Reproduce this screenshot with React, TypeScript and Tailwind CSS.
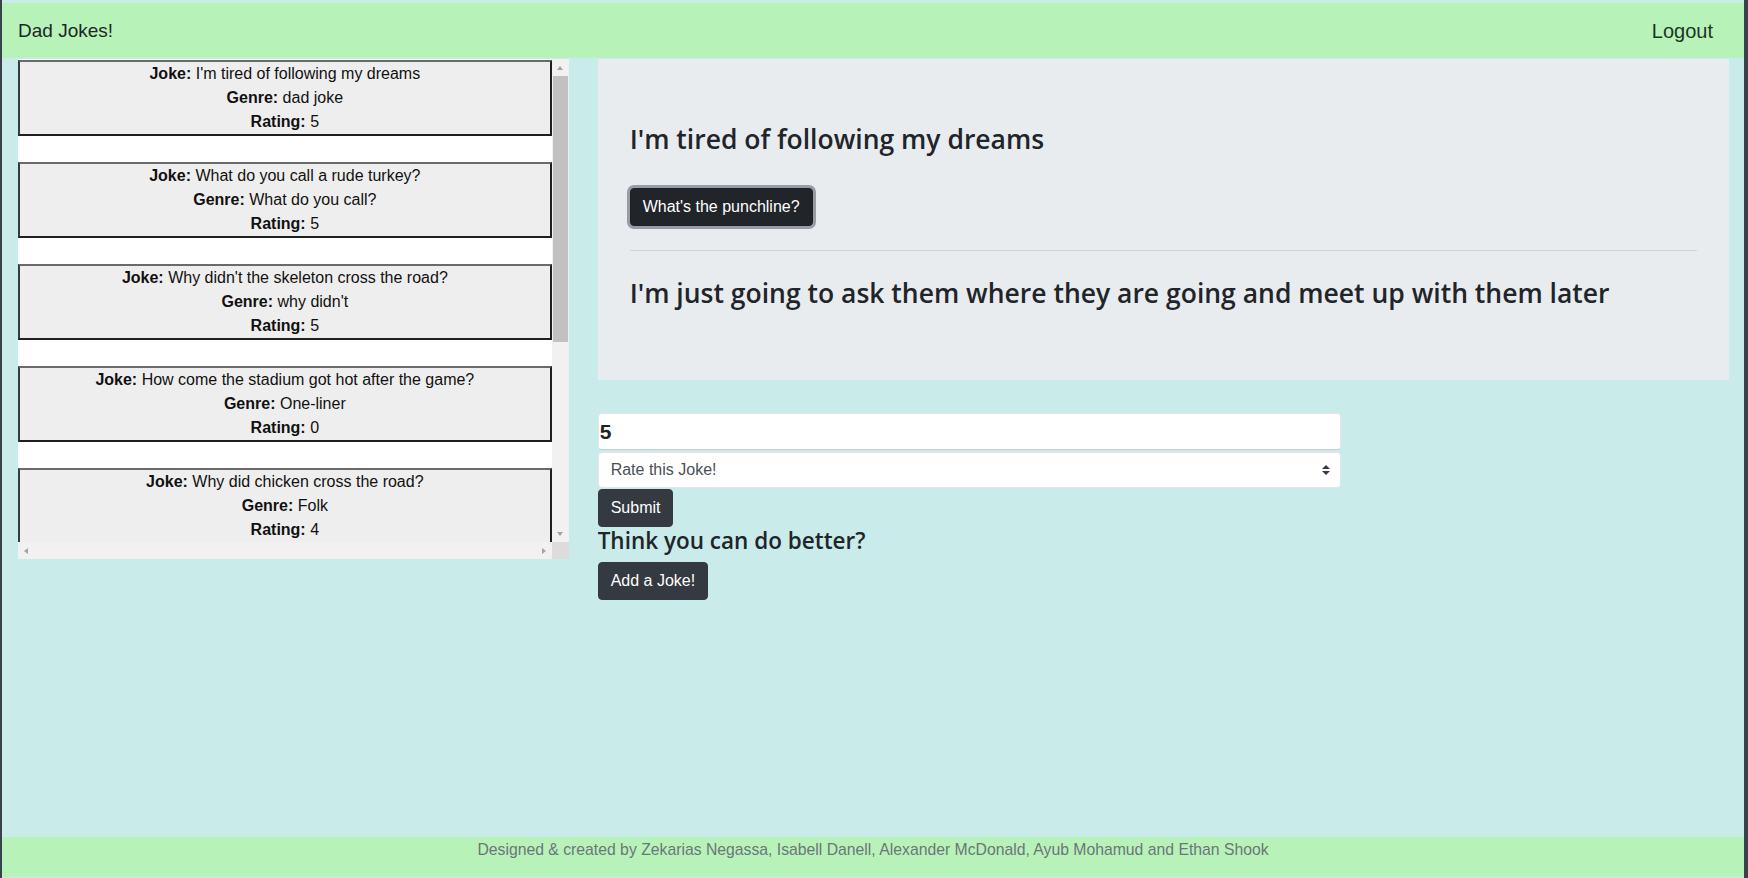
// Dad Jokes — joke list, punchline panel and rating form

const jokes = [
  { joke: "I'm tired of following my dreams", genre: "dad joke", rating: 5 },
  { joke: "What do you call a rude turkey?", genre: "What do you call?", rating: 5 },
  { joke: "Why didn't the skeleton cross the road?", genre: "why didn't", rating: 5 },
  { joke: "How come the stadium got hot after the game?", genre: "One-liner", rating: 0 },
  { joke: "Why did chicken cross the road?", genre: "Folk", rating: 4 },
  { joke: "What do you call a fake noodle?", genre: "What do you call?", rating: 3 },
  { joke: "Why don't eggs tell jokes?", genre: "dad joke", rating: 4 },
  { joke: "What did the ocean say to the beach?", genre: "One-liner", rating: 2 },
];

const font = "font-['Liberation_Sans','Noto_Sans',sans-serif]";
const heading = "font-['Open_Sans','Noto_Sans',sans-serif] font-semibold";

function Arrow({ dir }: { dir: "up" | "down" | "left" | "right" }) {
  const d = {
    up: "M4 2L7 6H1z",
    down: "M4 6L7 2H1z",
    left: "M2 4L6 1V7z",
    right: "M6 4L2 1V7z",
  }[dir];
  return (
    <svg className="w-[8px] h-[8px]" viewBox="0 0 8 8">
      <path fill="#a3a3a3" d={d} />
    </svg>
  );
}

export default function App() {
  return (
    <div
      className={`${font} h-[878px] flex flex-col bg-[#c9ecea] border-l-2 border-r-4 border-[#3a404c] pt-[3px] pb-[1px] text-[#212529]`}
    >
      {/* ── Navbar ── */}
      <nav className="h-[55px] shrink-0 bg-[#b7f3b8] flex items-center justify-between pl-4 pr-[31px]">
        <span className="text-[19px] leading-[30px] pt-px">Dad Jokes!</span>
        <a href="#" className="text-[20px] leading-[30px] pt-px text-[#1e3324]">
          Logout
        </a>
      </nav>

      {/* ── Main row ── */}
      <div className="flex flex-1 mt-[1px]">
        {/* Left: joke list with scrollbars */}
        <div className="w-1/3 pl-4 pr-[14px]">
          <div className="h-[500px] flex flex-col bg-white">
            <div className="flex flex-1 min-h-0">
              <div className="flex-1 min-w-0 overflow-hidden pt-px">
                {jokes.map((j) => (
                  <div
                    key={j.joke}
                    className="mb-[26px] bg-[#eeeeee] border-2 border-[#1f1f1f] border-t-[#6a6a6a] border-l-[#3a3a3a] text-center text-[16px] leading-[24px] text-[#111]"
                  >
                    <p>
                      <b>Joke:</b> {j.joke}
                    </p>
                    <p>
                      <b>Genre:</b> {j.genre}
                    </p>
                    <p>
                      <b>Rating:</b> {j.rating}
                    </p>
                  </div>
                ))}
              </div>
              {/* vertical scrollbar */}
              <div className="w-[17px] bg-[#f1f1f1] flex flex-col items-center">
                <div className="h-[17px] flex items-center justify-center">
                  <Arrow dir="up" />
                </div>
                <div className="w-[15px] h-[266px] bg-[#c1c1c1]" />
                <div className="flex-1" />
                <div className="h-[17px] flex items-center justify-center">
                  <Arrow dir="down" />
                </div>
              </div>
            </div>
            {/* horizontal scrollbar */}
            <div className="h-[17px] flex">
              <div className="flex-1 bg-[#f1f1f1] flex items-center justify-between px-[4px]">
                <Arrow dir="left" />
                <Arrow dir="right" />
              </div>
              <div className="w-[17px] bg-[#dcdcdc]" />
            </div>
          </div>
        </div>

        {/* Right: punchline + form */}
        <div className="w-2/3 pl-[15px] pr-[15px] flex flex-col">
          <div className="bg-[#e9ecef] px-8 pt-16 pb-[62px]">
            <h3 className={`${heading} text-[26.5px] leading-[1.25]`}>I'm tired of following my dreams</h3>
            <button className="mt-[32px] px-3 py-[6px] text-[16px] leading-[24px] text-white bg-[#212529] border border-[#1d2124] rounded-[4px] shadow-[0_0_0_3px_rgba(130,138,145,0.8)]">
              What's the punchline?
            </button>
            <hr className="mt-[24px] mb-[26px] border-0 border-t border-[#d2d4d7]" />
            <h3 className={`${heading} text-[26.5px] leading-[1.25] mb-2`}>
              I'm just going to ask them where they are going and meet up with them later
            </h3>
          </div>

          <form className="mt-[33px] w-[743px] flex flex-col items-start">
            <input
              defaultValue="5"
              className="w-full h-[37px] bg-white rounded-[4px] border border-[#e2e6ea] border-b-[#c8ccd0] pl-px text-[21px] font-semibold text-[#222] outline-none"
            />
            <div className="relative w-full mt-[2px]">
              <select className="w-full h-[36px] appearance-none bg-white rounded-[4px] border border-[#e2e6ea] pl-3 text-[16px] text-[#495057] outline-none">
                <option>Rate this Joke!</option>
                <option>1</option>
                <option>2</option>
                <option>3</option>
                <option>4</option>
                <option>5</option>
              </select>
              <svg className="absolute right-[11px] top-[12px] w-[8px] h-[12px]" viewBox="0 0 4 5">
                <path fill="#343a40" d="M2 0L0 2h4zm0 5L0 3h4z" />
              </svg>
            </div>
            <button
              type="button"
              className="mt-px px-3 py-[6px] text-[16px] leading-[24px] text-white bg-[#343a40] border border-[#343a40] rounded-[4px]"
            >
              Submit
            </button>
            <h4 className={`${heading} text-[22.5px] leading-[1.2] mb-2`}>Think you can do better?</h4>
            <button
              type="button"
              className="px-3 py-[6px] text-[16px] leading-[24px] text-white bg-[#343a40] border border-[#343a40] rounded-[4px]"
            >
              Add a Joke!
            </button>
          </form>
        </div>
      </div>

      {/* ── Footer ── */}
      <footer className="h-[40px] shrink-0 bg-[#b7f3b8] pt-px text-center text-[15.75px] leading-[24px] text-[#6c757d]">
        Designed &amp; created by Zekarias Negassa, Isabell Danell, Alexander McDonald, Ayub Mohamud and Ethan Shook
      </footer>
    </div>
  );
}
